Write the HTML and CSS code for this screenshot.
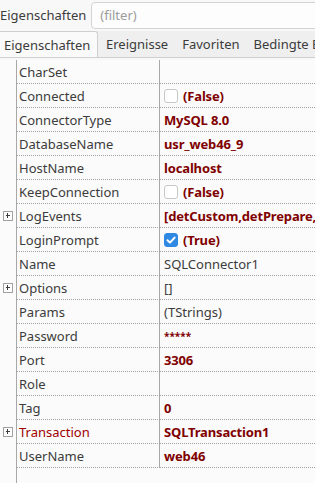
FILE: index.html
```html
<!DOCTYPE html>
<html lang="de">
<head>
<meta charset="utf-8">
<title>Eigenschaften</title>
<link rel="stylesheet" href="styles.css">
</head>
<body>
<div class="app">
  <div class="topbar">
    <span class="toplabel">Eigenschaften</span>
    <div class="filter"><span class="placeholder">(filter)</span></div>
  </div>
  <div class="tabs">
    <div class="tab active">Eigenschaften</div>
    <div class="tab">Ereignisse</div>
    <div class="tab">Favoriten</div>
    <div class="tab">Bedingte Eigenschaften</div>
  </div>
  <div class="grid">
    <div class="row"><div class="gut"></div><div class="name">CharSet</div><div class="val"></div></div>
    <div class="row"><div class="gut"></div><div class="name">Connected</div><div class="val mod"><span class="cb"></span>(False)</div></div>
    <div class="row"><div class="gut"></div><div class="name">ConnectorType</div><div class="val mod">MySQL 8.0</div></div>
    <div class="row"><div class="gut"></div><div class="name">DatabaseName</div><div class="val mod">usr_web46_9</div></div>
    <div class="row"><div class="gut"></div><div class="name">HostName</div><div class="val mod">localhost</div></div>
    <div class="row"><div class="gut"></div><div class="name">KeepConnection</div><div class="val mod"><span class="cb"></span>(False)</div></div>
    <div class="row"><div class="gut"><span class="plus"></span></div><div class="name">LogEvents</div><div class="val mod">[detCustom,detPrepare,detExecute]</div></div>
    <div class="row"><div class="gut"></div><div class="name">LoginPrompt</div><div class="val mod"><span class="cb on"><svg viewBox="0 0 14 14" width="14" height="14"><path d="M3.5 7.2 L6 9.6 L10.6 4.6" fill="none" stroke="#fff" stroke-width="2" stroke-linecap="round" stroke-linejoin="round"/></svg></span>(True)</div></div>
    <div class="row"><div class="gut"></div><div class="name">Name</div><div class="val">SQLConnector1</div></div>
    <div class="row"><div class="gut"><span class="plus"></span></div><div class="name">Options</div><div class="val">[]</div></div>
    <div class="row"><div class="gut"></div><div class="name">Params</div><div class="val">(TStrings)</div></div>
    <div class="row"><div class="gut"></div><div class="name">Password</div><div class="val mod pw">*****</div></div>
    <div class="row"><div class="gut"></div><div class="name">Port</div><div class="val mod">3306</div></div>
    <div class="row"><div class="gut"></div><div class="name">Role</div><div class="val"></div></div>
    <div class="row"><div class="gut"></div><div class="name">Tag</div><div class="val mod">0</div></div>
    <div class="row"><div class="gut"><span class="plus"></span></div><div class="name ref">Transaction</div><div class="val mod">SQLTransaction1</div></div>
    <div class="row"><div class="gut"></div><div class="name">UserName</div><div class="val mod">web46</div></div>
  </div>
</div>
</body>
</html>
```
FILE: styles.css
```css
* { box-sizing: border-box; }
html, body { margin: 0; padding: 0; height: 100%; }
body {
  font-family: "Noto Sans", "Open Sans", sans-serif;
  font-size: 13px;
  color: #3c3c3c;
  background: #f8f8f8;
  overflow: hidden;
}
.app { display: flex; flex-direction: column; height: 100%; }
.topbar {
  height: 31px;
  display: flex;
  align-items: center;
  gap: 5px;
  padding: 0 0 1px 0;
  flex: none;
}
.toplabel { white-space: nowrap; }
.filter {
  flex: 1;
  height: 27px;
  margin-right: -10px;
  border: 1px solid #d4d4d4;
  border-radius: 4px;
  background: #fdfdfd;
  display: flex;
  align-items: center;
  padding-left: 8px;
}
.placeholder { color: #9c9c9c; }
.tabs {
  height: 27px;
  display: flex;
  flex: none;
  background: #efefef;
  border-bottom: 1px solid #cfcfcf;
  white-space: nowrap;
  overflow: hidden;
}
.tab {
  height: 26px;
  display: flex;
  align-items: center;
  padding: 0 6px 0 8px;
  flex: none;
}
.tab.active {
  height: 27px;
  width: 98px;
  padding-left: 4px;
  background: #fafafa;
  border: 1px solid #cfcfcf;
  border-left: none;
  border-bottom: none;
  border-radius: 0 3px 0 0;
}
.grid {
  flex: 1;
  margin-top: 2px;
  background: #fafbfa linear-gradient(to right, transparent 16px, #a8a8a8 16px, #a8a8a8 17px, transparent 17px);
}
.row {
  display: grid;
  grid-template-columns: 17px 143px 1fr;
  height: 24px;
}
.gut { display: flex; align-items: center; padding-left: 3px; }
.name, .val {
  border-bottom: 1px dotted #a0a0a0;
  display: flex;
  align-items: center;
  white-space: nowrap;
  overflow: hidden;
  padding-top: 1px;
}
.name { padding-left: 2px; border-right: 1px solid #a8a8a8; }
.val { padding-left: 4px; }
.mod { color: #800000; font-weight: bold; letter-spacing: -0.15px; }
.ref { color: #a00000; }
.pw { font-size: 10px; letter-spacing: 0; }
.cb {
  width: 14px;
  height: 14px;
  border: 1px solid #c8c8c8;
  border-radius: 3px;
  background: #fff;
  margin-right: 5px;
  flex: none;
  display: flex;
}
.cb.on { background: #2f88e2; border-color: #2f88e2; }
.cb.on svg { margin: -1px; }
.plus {
  width: 10px;
  height: 10px;
  border: 1px solid #a0a0a0;
  background: #fdfdfd;
  position: relative;
  display: block;
}
.plus::before, .plus::after {
  content: "";
  position: absolute;
  background: #3c3c3c;
}
.plus::before { left: 2px; top: 3px; width: 4px; height: 1px; }
.plus::after { left: 3px; top: 1px; width: 1px; height: 5px; }
```
